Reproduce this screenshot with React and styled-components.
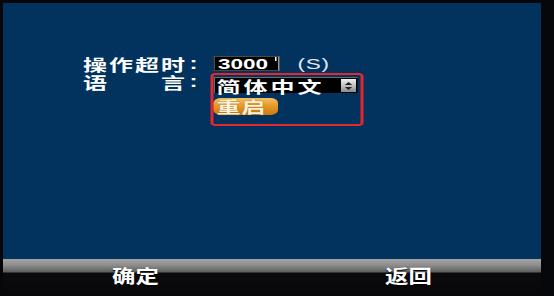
import React from "react";
import styled, { createGlobalStyle } from "styled-components";

const Global = createGlobalStyle`
  html, body { margin: 0; padding: 0; background: #06070b; }
  body {
    width: 554px; height: 296px; overflow: hidden;
    font-family: "Noto Sans CJK SC", "Noto Sans", sans-serif;
  }
`;

const Screen = styled.div`
  width: 554px;
  height: 296px;
  box-sizing: border-box;
  padding: 3px 13px 0 3px;
  display: flex;
  flex-direction: column;
  background: #06070b;
`;

const Panel = styled.div`
  height: 256px;
  box-sizing: border-box;
  padding: 53px 0 0 80px;
  background: #02335f;
`;

const Stretch = styled.div`
  width: 200px;
  display: flex;
  flex-direction: column;
  gap: 1px;
  transform: scaleX(1.5);
  transform-origin: 0 0;
`;

const Row = styled.div`
  display: grid;
  grid-template-columns: 87px auto;
  align-items: start;
`;

const Label = styled.div`
  display: flex;
  align-items: center;
  color: #fff;
  font-weight: 700;
  font-size: 16px;
  line-height: 16px;
  padding-top: ${(p) => p.$pt || 0}px;
`;

const LabelText = styled.div`
  display: flex;
  justify-content: space-between;
  width: 68px;
`;

const Colon = styled.span`
  margin-left: 3px;
  font-family: "Liberation Sans", sans-serif;
`;

const Value = styled.div`
  display: flex;
  align-items: center;
`;

const InputBox = styled.div`
  position: relative;
  width: 44px;
  height: 15px;
  box-sizing: border-box;
  background: #000;
  border: 1px solid #4a4a4a;
  border-right-color: #9a9a9a;
  color: #fff;
  font-family: "Liberation Sans", Arial, sans-serif;
  font-weight: 700;
  font-size: 15px;
  line-height: 13px;
  padding-left: 2px;
  &::after {
    content: "";
    position: absolute;
    right: 1px;
    top: 0;
    width: 1px;
    height: 4px;
    background: #fff;
  }
`;

const Unit = styled.span`
  margin-left: 12px;
  color: #e4e8f4;
  font-family: "Liberation Sans", Arial, sans-serif;
  font-size: 15px;
  line-height: 15px;
  letter-spacing: 0.5px;
`;

const FocusFrame = styled.div`
  margin-left: -2px;
  width: 102px;
  box-sizing: border-box;
  border: 2px solid #e5262b;
  border-radius: 3px;
  padding: 2px 2px 9px 0;
  display: flex;
  flex-direction: column;
  gap: 5px;
`;

const Select = styled.div`
  width: 96px;
  height: 16px;
  box-sizing: border-box;
  background: #000;
  border-top: 1px solid #6a6a6a;
  border-left: 1px solid #6a6a6a;
  display: flex;
  align-items: center;
  justify-content: space-between;
  padding: 0 1px 0 1px;
`;

const SelectText = styled.span`
  color: #fff;
  font-weight: 700;
  font-size: 16px;
  line-height: 14px;
  letter-spacing: 2px;
`;

const Spinner = styled.div`
  width: 10px;
  height: 13px;
  background: linear-gradient(#f0f0f0, #b8b8b8 60%, #8a8a8a);
  display: flex;
  align-items: center;
  justify-content: center;
`;

const Button = styled.div`
  width: 43px;
  height: 17px;
  box-sizing: border-box;
  border-radius: 5px;
  background: linear-gradient(#f4c066, #e59a28 45%, #cd7a12);
  color: #fbf2da;
  font-weight: 700;
  font-size: 16px;
  line-height: 17px;
  letter-spacing: 0.5px;
  padding-left: 2px;
  text-shadow: 0 0 1px #9a5a08;
`;

const Footer = styled.div`
  height: 37px;
  box-sizing: border-box;
  padding: 7px 0 0 109px;
  display: grid;
  grid-template-columns: 273px auto;
  align-items: start;
  background: linear-gradient(
    to bottom,
    #a4a4a4 0,
    #8e8e8e 6px,
    #5e5e5e 13px,
    #0b0b0e 14px,
    #07070a 100%
  );
`;

const FooterLabel = styled.span`
  justify-self: start;
  display: inline-block;
  color: #fff;
  font-weight: 700;
  font-size: 18px;
  line-height: 18px;
  transform: scaleX(1.3);
  transform-origin: left center;
  text-shadow: 0 1px 1px #000;
`;

const Chars = ({ text }) => (
  <LabelText>
    {Array.from(text).map((c, i) => (
      <span key={i}>{c}</span>
    ))}
  </LabelText>
);

export default function App() {
  return (
    <>
      <Global />
      <Screen>
        <Panel>
          <Stretch>
            <Row>
              <Label>
                <Chars text="操作超时" />
                <Colon>:</Colon>
              </Label>
              <Value>
                <InputBox>3000</InputBox>
                <Unit>(S)</Unit>
              </Value>
            </Row>
            <Row>
              <Label $pt={1}>
                <Chars text="语言" />
                <Colon>:</Colon>
              </Label>
              <FocusFrame>
                <Select>
                  <SelectText>简体中文</SelectText>
                  <Spinner>
                    <svg width="6" height="10" viewBox="0 0 6 10">
                      <path d="M3 1 L5.5 4 L0.5 4 Z" fill="#222" />
                      <path d="M3 9 L5.5 6 L0.5 6 Z" fill="#222" />
                    </svg>
                  </Spinner>
                </Select>
                <Button>重启</Button>
              </FocusFrame>
            </Row>
          </Stretch>
        </Panel>
        <Footer>
          <FooterLabel>确定</FooterLabel>
          <FooterLabel>返回</FooterLabel>
        </Footer>
      </Screen>
    </>
  );
}
